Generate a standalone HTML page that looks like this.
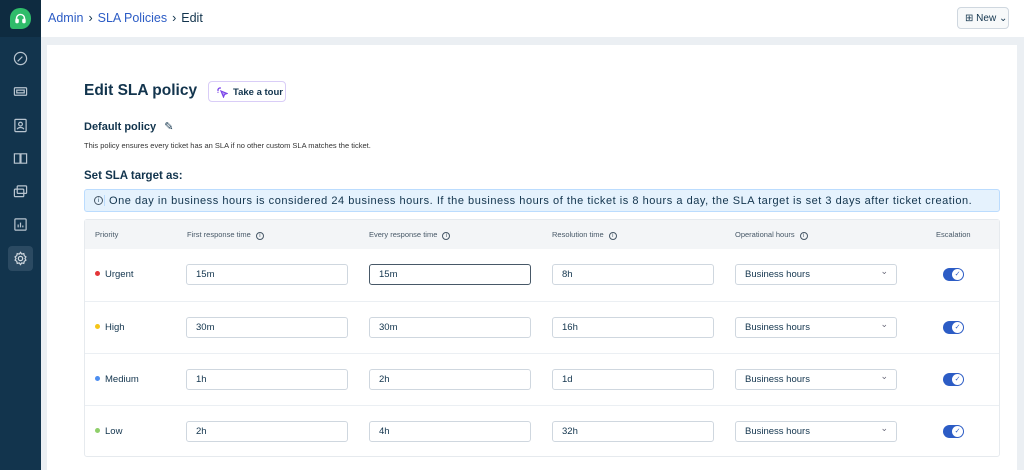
<!DOCTYPE html>
<html><head><meta charset="utf-8"><style>
*{box-sizing:border-box;margin:0;padding:0}
body{width:1024px;height:470px;overflow:hidden;background:#ebeff3;font-family:"Liberation Sans",sans-serif;color:#12344d;position:relative}
.sb{position:absolute;left:0;top:0;width:41px;height:470px;background:#12344d}
.sbt{position:absolute;left:0;top:0;width:41px;height:37px;background:#0e2b40}
.logo{position:absolute;left:10px;top:8px;width:21px;height:21px;background:#2fbc6a;border-radius:10px 10px 10px 3px}
.ic{position:absolute;left:13px;width:15px;height:15px}
.hdr{position:absolute;left:41px;top:0;right:0;height:37px;background:#fff}
.bc{position:absolute;left:7px;top:11px;font-size:12.5px;color:#2c5cc5}
.bc span{color:#12344d;margin:0 5px}
.new{position:absolute;right:15px;top:7px;width:52px;height:22px;border:1px solid #cfd7df;border-radius:4px;font-size:10px;padding:5px 0 0 7px;background:#f7f9fa}
.card{position:absolute;left:47px;top:45px;width:970px;height:425px;background:#fff}
h1{position:absolute;left:84px;top:82px;font-size:15.5px;font-weight:bold}
.tour{position:absolute;left:208px;top:81px;width:78px;height:21px;border:1px solid #d9cdf7;border-radius:4px;font-size:9.5px;font-weight:bold;padding:5px 0 0 24px}
.dp{position:absolute;left:84px;top:120px;font-size:11px;font-weight:bold}
.desc{position:absolute;left:84px;top:141px;font-size:7.5px;color:#333}
.st{position:absolute;left:84px;top:170px;font-size:11.5px;font-weight:bold}
.info{position:absolute;left:84px;top:189px;width:916px;height:23px;background:#e5f2fd;border:1px solid #bbdcfe;border-radius:3px;font-size:11px;letter-spacing:.53px;padding:5px 0 0 24px;color:#12344d;white-space:nowrap}
.tbl{position:absolute;left:84px;top:219px;width:916px;height:238px;border:1px solid #e6eaee;border-radius:3px}
.th{position:absolute;top:0;left:0;right:0;height:29px;background:#f3f5f7}
.th div{position:absolute;top:10px;font-size:7.5px;color:#475867}
.row{position:absolute;left:0;right:0;height:52px;border-top:1px solid #ebeff3}
.pr{position:absolute;left:10px;top:20px;font-size:9.5px}
.pr i{display:inline-block;width:5px;height:5px;border-radius:50%;margin-right:5px;vertical-align:1px}
.in{position:absolute;top:15px;width:162px;height:21px;border:1px solid #cfd7df;border-radius:3px;font-size:9.5px;padding:4px 0 0 9px}
.sel{left:650px}
.sel:after{content:"⌄";position:absolute;right:8px;top:1px;font-size:9px;color:#667}
.tg{position:absolute;left:858px;top:19px;width:21px;height:13px;border-radius:7px;background:#2c5cc5}
.tg:after{content:"✓";position:absolute;right:1px;top:1px;width:11px;height:11px;border-radius:50%;background:#fff;font-size:7px;color:#2c5cc5;text-align:center;line-height:11px}
.ii{display:inline-block;width:8px;height:8px;border:1px solid #475867;border-radius:50%;font-size:6px;text-align:center;line-height:7px;margin-left:3px;letter-spacing:0}
</style></head><body>
<div class="sb"></div><div class="sbt"></div><div class="logo"></div>
<svg style="position:absolute;left:14px;top:12px;width:13px;height:13px" viewBox="0 0 16 16" fill="none" stroke="#fff" stroke-width="1.8"><path d="M3 10V8a5 5 0 0110 0v2"/><rect x="2.5" y="9" width="2.5" height="4" rx="1" fill="#fff"/><rect x="11" y="9" width="2.5" height="4" rx="1" fill="#fff"/></svg>
<svg class="ic" style="top:51px" viewBox="0 0 16 16" fill="none" stroke="#b8c4cf" stroke-width="1.3"><circle cx="8" cy="8" r="6.5"/><path d="M5 11l5-5"/></svg>
<svg class="ic" style="top:84px" viewBox="0 0 16 16" fill="none" stroke="#b8c4cf" stroke-width="1.3"><rect x="1.5" y="4" width="13" height="8" rx="1"/><path d="M4 6.5h8v3H4z"/></svg>
<svg class="ic" style="top:118px" viewBox="0 0 16 16" fill="none" stroke="#b8c4cf" stroke-width="1.3"><rect x="2" y="1.5" width="12" height="13" rx="1"/><circle cx="8" cy="6.5" r="2"/><path d="M4.5 12c1-2.5 6-2.5 7 0"/></svg>
<svg class="ic" style="top:151px" viewBox="0 0 16 16" fill="none" stroke="#b8c4cf" stroke-width="1.3"><path d="M1.5 3h6v10h-6zM8.5 3h6v10h-6z"/></svg>
<svg class="ic" style="top:184px" viewBox="0 0 16 16" fill="none" stroke="#b8c4cf" stroke-width="1.3"><rect x="4.5" y="2" width="10" height="8" rx="1"/><rect x="1.5" y="5.5" width="10" height="8" rx="1"/></svg>
<svg class="ic" style="top:217px" viewBox="0 0 16 16" fill="none" stroke="#b8c4cf" stroke-width="1.3"><rect x="2" y="2" width="12" height="12" rx="1"/><path d="M5.5 11V8M8 11V6M10.5 11V9"/></svg>
<div style="position:absolute;left:8px;top:246px;width:25px;height:25px;border-radius:4px;background:#2b4a62"></div>
<svg class="ic" style="top:251px" viewBox="0 0 16 16" fill="none" stroke="#d0d8df" stroke-width="1.3"><circle cx="8" cy="8" r="2.3"/><path d="M8 1.5l1.3 1.8 2.2-.5.5 2.2 1.8 1.3-1 1.7 1 1.7-1.8 1.3-.5 2.2-2.2-.5L8 14.5l-1.3-1.8-2.2.5-.5-2.2-1.8-1.3 1-1.7-1-1.7L4 5l.5-2.2 2.2.5z"/></svg>
<div class="hdr"><div class="bc">Admin<span>›</span>SLA Policies<span>›</span><b style="font-weight:normal;color:#12344d">Edit</b></div>
<div class="new">⊞ New ⌄</div></div>
<div class="card"></div>
<h1>Edit SLA policy</h1>
<div class="tour"><svg style="position:absolute;left:7px;top:4px;width:12px;height:12px" viewBox="0 0 12 12" fill="none" stroke="#7b45e8" stroke-width="1.2"><path d="M5 5l6 2.5-2.5 1L7.5 11z" fill="#b79af5"/><path d="M1 4h2M4 1v2M2 2l1 1M1.5 6.5l1-.5"/></svg>Take a tour</div>
<div class="dp">Default policy <span style="font-weight:normal;margin-left:5px">✎</span></div>
<div class="desc">This policy ensures every ticket has an SLA if no other custom SLA matches the ticket.</div>
<div class="st">Set SLA target as:</div>
<div class="info"><span style="position:absolute;left:6px;top:6px;width:9px;height:9px;line-height:8px" class="ii">i</span><span style="position:absolute;left:19px;top:5px;width:1px;height:11px;background:#bbdcfe"></span>One day in business hours is considered 24 business hours. If the business hours of the ticket is 8 hours a day, the SLA target is set 3 days after ticket creation.</div>
<div class="tbl">
<div class="th"><div style="left:10px">Priority</div><div style="left:102px">First response time <span class="ii">i</span></div><div style="left:284px">Every response time <span class="ii">i</span></div><div style="left:467px">Resolution time <span class="ii">i</span></div><div style="left:650px">Operational hours <span class="ii">i</span></div><div style="left:851px">Escalation</div></div>
<div class="row" style="top:29px;border-top:none"><div class="pr"><i style="background:#e43538"></i>Urgent</div><div class="in" style="left:101px">15m</div><div class="in" style="left:284px;border-color:#475867">15m</div><div class="in" style="left:467px">8h</div><div class="in sel">Business hours</div><div class="tg"></div></div>
<div class="row" style="top:81px"><div class="pr"><i style="background:#f5c518"></i>High</div><div class="in" style="left:101px">30m</div><div class="in" style="left:284px">30m</div><div class="in" style="left:467px">16h</div><div class="in sel">Business hours</div><div class="tg"></div></div>
<div class="row" style="top:133px"><div class="pr"><i style="background:#4d8ef0"></i>Medium</div><div class="in" style="left:101px">1h</div><div class="in" style="left:284px">2h</div><div class="in" style="left:467px">1d</div><div class="in sel">Business hours</div><div class="tg"></div></div>
<div class="row" style="top:185px"><div class="pr"><i style="background:#8fcf6a"></i>Low</div><div class="in" style="left:101px">2h</div><div class="in" style="left:284px">4h</div><div class="in" style="left:467px">32h</div><div class="in sel">Business hours</div><div class="tg"></div></div>
</div>
</body></html>
